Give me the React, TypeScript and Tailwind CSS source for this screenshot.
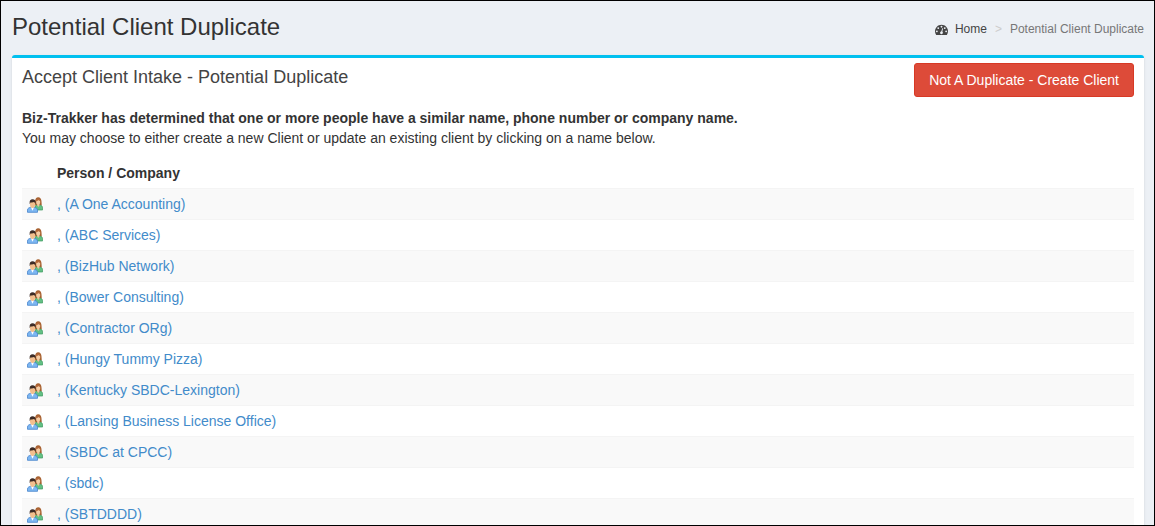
const companies = [
  'A One Accounting',
  'ABC Services',
  'BizHub Network',
  'Bower Consulting',
  'Contractor ORg',
  'Hungy Tummy Pizza',
  'Kentucky SBDC-Lexington',
  'Lansing Business License Office',
  'SBDC at CPCC',
  'sbdc',
  'SBTDDDD',
];

function DashboardIcon() {
  return (
    <svg viewBox="0 0 1792 1792" className="w-[13px] h-[13px]" fill="currentColor" aria-hidden="true">
      <path d="M384 1152q0-53-37.5-90.5t-90.5-37.5-90.5 37.5-37.5 90.5 37.5 90.5 90.5 37.5 90.5-37.5 37.5-90.5zm192-448q0-53-37.5-90.5t-90.5-37.5-90.5 37.5-37.5 90.5 37.5 90.5 90.5 37.5 90.5-37.5 37.5-90.5zm428 481l101-382q6-26-7.5-48.5t-38.5-29.5-48 6.5-30 39.5l-101 382q-60 5-107 43.5t-63 98.5q-20 77 20 146t117 89 146-20 89-117q16-60-6-117t-72-91zm660-33q0-53-37.5-90.5t-90.5-37.5-90.5 37.5-37.5 90.5 37.5 90.5 90.5 37.5 90.5-37.5 37.5-90.5zm-640-640q0-53-37.5-90.5t-90.5-37.5-90.5 37.5-37.5 90.5 37.5 90.5 90.5 37.5 90.5-37.5 37.5-90.5zm448 192q0-53-37.5-90.5t-90.5-37.5-90.5 37.5-37.5 90.5 37.5 90.5 90.5 37.5 90.5-37.5 37.5-90.5zm320 448q0 261-141 483-19 29-54 29h-1402q-35 0-54-29-141-221-141-483 0-182 71-348t191-286 286-191 348-71 348 71 286 191 191 286 71 348z" />
    </svg>
  );
}

function PeopleIcon() {
  return (
    <svg viewBox="0 0 16 16" className="w-4 h-4" aria-hidden="true">
      {/* woman, behind */}
      <path d="M7.600 8.500C8.400 6 7.200.3 11.200.3s3.200 5.500 3.600 8.200z" fill="#a5602f" />
      <path d="M8 13V10c0-1.300 1.400-1.900 3.500-1.900s4.100.6 4.100 2.600V13z" fill="#62c084" stroke="#3c9a5e" strokeWidth=".7" />
      <path d="M10.200 7h2.200v1.600l-1.100 1.300-1.100-1.300z" fill="#efc298" />
      <ellipse cx="11.200" cy="5" rx="2" ry="2.800" fill="#f6cda4" />
      <path d="M9 4.200C9.200 2.400 10.100 1.500 11.400 1.500s2 .9 2.200 2.700c-.9-.2-1.500-.6-1.900-1.200-.5.700-1.500 1.100-2.700 1.200z" fill="#b5683a" />
      {/* man, in front */}
      <path d="M.5 15.300v-2.200c0-2 1.800-2.900 4.900-2.900s5.100.9 5.100 2.900v2.200z" fill="#7db7f2" stroke="#4683cb" strokeWidth=".8" />
      <path d="M3.900 10.300h3.200l-1.600 3.500z" fill="#fff" />
      <path d="M2.600 6.500C2.400 3.500 3.500 2.200 5.600 2.200s3.200 1.300 3 4.300l-.5.700H3.100z" fill="#3b2a25" />
      <ellipse cx="5.600" cy="7.300" rx="2.600" ry="3.600" fill="#f3bf8e" />
      <path d="M3 5.600c0-1.900.9-2.400 2.600-2.400s2.700.5 2.700 2.400c-.8-.1-1.300-.3-1.700-.7-.9.500-2 .7-3.600.7z" fill="#3b2a25" />
    </svg>
  );
}

function Breadcrumb() {
  return (
    <nav aria-label="Breadcrumb">
      <ol className="flex items-center text-xs leading-4 text-[#777777]">
        <li>
          <a href="#" className="flex items-center gap-[7px] text-[#444444]">
            <DashboardIcon />
            Home
          </a>
        </li>
        <li className="px-2 text-[#cccccc]" aria-hidden="true">&gt;</li>
        <li>Potential Client Duplicate</li>
      </ol>
    </nav>
  );
}

function DuplicateTable() {
  return (
    <table className="w-full mt-2.5 text-left">
      <thead>
        <tr>
          <th className="w-[30px] p-[5px]" aria-label="Type"></th>
          <th className="p-[5px] font-bold">Person / Company</th>
        </tr>
      </thead>
      <tbody>
        {companies.map((company) => (
          <tr key={company} className="border-t border-[#f4f4f4] odd:bg-[#f9f9f9]">
            <td className="px-[5px] pt-[7px] pb-[5px]">
              <PeopleIcon />
            </td>
            <td className="p-[5px]">
              <a href="#" className="text-[#428bca] hover:underline">
                , ({company})
              </a>
            </td>
          </tr>
        ))}
      </tbody>
    </table>
  );
}

export default function App() {
  return (
    <div className="h-screen overflow-hidden border border-black bg-[#ecf0f5] font-['Liberation_Sans',Arial,sans-serif] text-sm leading-5 text-[#333333]">
      <header className="flex items-end justify-between pl-[11px] pr-2.5 pt-[11px] pb-[13px]">
        <h1 className="text-2xl leading-[30px]">Potential Client Duplicate</h1>
        <div className="pb-[5px]">
          <Breadcrumb />
        </div>
      </header>

      <main className="ml-[11px] mr-2.5 rounded-[3px] border-t-[3px] border-[#00c0ef] bg-white px-2.5 pt-[5px] pb-2.5 shadow-sm">
        <div className="flex items-start justify-between">
          <h2 className="text-lg leading-7 text-[#444444]">
            Accept Client Intake - Potential Duplicate
          </h2>
          <button
            type="button"
            className="rounded-[3px] border border-[#d73925] bg-[#dd4b39] px-3.5 py-1.5 text-white"
          >
            Not A Duplicate - Create Client
          </button>
        </div>

        <p className="mt-[11px]">
          <strong>
            Biz-Trakker has determined that one or more people have a similar
            name, phone number or company name.
          </strong>
          <br />
          You may choose to either create a new Client or update an existing
          client by clicking on a name below.
        </p>

        <DuplicateTable />
      </main>
    </div>
  );
}
